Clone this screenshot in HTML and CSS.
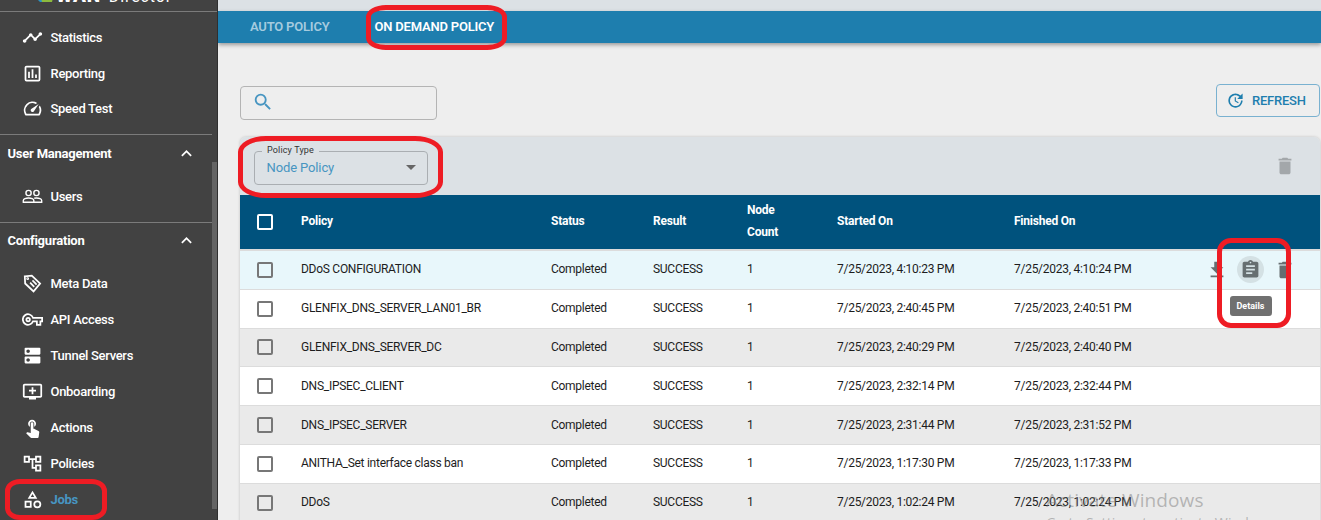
FILE: index.html
```html
<!DOCTYPE html>
<html lang="en">
<head>
<meta charset="utf-8">
<title>Director - Jobs</title>
<link rel="stylesheet" href="styles.css">
</head>
<body>
<svg class="defs" width="0" height="0">
  <symbol id="trash" viewBox="0 0 24 24"><path d="M6 19c0 1.100.9 2 2 2h8c1.100 0 2-.9 2-2V7H6v12zM19 4h-3.500l-1-1h-5l-1 1H5v2h14V4z"/></symbol>
  <symbol id="chevron" viewBox="0 0 24 24"><path d="M12 8l-6 6 1.410 1.410L12 10.830l4.590 4.580L18 14z"/></symbol>
</svg>
<div class="app">
  <aside class="sidebar">
    <div class="brand">
      <svg class="brand-mark" width="18" height="14" viewBox="0 0 18 14"><path fill="#2b94c4" d="M0 10h6l2 4H4z"/><path fill="#8dba3d" d="M5 10h12l-1 4H6z"/></svg>
      <b class="brand-bold">WAN</b><span class="brand-name">Director</span>
    </div>
    <nav class="nav">
      <ul class="group">
        <li class="item"><svg class="icon" viewBox="0 0 24 24"><path d="M23 8c0 1.100-.9 2-2 2-.18 0-.35-.02-.51-.07l-3.560 3.550c.05.16.07.34.07.52 0 1.100-.9 2-2 2s-2-.9-2-2c0-.18.02-.36.07-.52l-2.550-2.550c-.16.05-.34.07-.52.07s-.36-.02-.52-.07l-4.550 4.560c.05.16.07.33.07.51 0 1.100-.9 2-2 2s-2-.9-2-2 .9-2 2-2c.18 0 .35.02.51.07l4.560-4.550C8.020 9.360 8 9.180 8 9c0-1.100.9-2 2-2s2 .9 2 2c0 .18-.02.36-.07.52l2.550 2.550c.16-.05.34-.07.52-.07s.36.02.52.07l3.550-3.560C19.020 8.350 19 8.180 19 8c0-1.100.9-2 2-2s2 .9 2 2z"/></svg>Statistics</li>
        <li class="item"><svg class="icon line" viewBox="0 0 24 24"><rect x="4" y="4" width="16" height="16" rx="1.200"/><path d="M8 17v-7M12 17V7M16 17v-4"/></svg>Reporting</li>
        <li class="item speed"><svg class="icon" viewBox="0 0 24 24"><path d="M20.380 8.570l-1.230 1.850a8 8 0 0 1-.22 7.580H5.070A8 8 0 0 1 15.580 6.850l1.850-1.230A10 10 0 0 0 3.350 19a2 2 0 0 0 1.720 1h13.850a2 2 0 0 0 1.740-1 10 10 0 0 0-.27-10.440zM10.590 15.410a2 2 0 0 0 2.830 0l5.660-8.490-8.490 5.660a2 2 0 0 0 0 2.830z"/></svg>Speed Test</li>
      </ul>
      <div class="heading">User Management<svg class="icon" viewBox="0 0 24 24"><use href="#chevron"/></svg></div>
      <ul class="group users">
        <li class="item"><svg class="icon line thin" viewBox="0 0 24 24"><circle cx="7.500" cy="8" r="3"/><circle cx="16.500" cy="8" r="3"/><path d="M1.500 18.500v-1.800c0-1.700 3-3 6-3s6 1.300 6 3v1.800zM14 14c.8-.2 1.700-.3 2.500-.3 3 0 6 1.300 6 3v1.800h-9"/></svg>Users</li>
      </ul>
      <div class="heading config">Configuration<svg class="icon" viewBox="0 0 24 24"><use href="#chevron"/></svg></div>
      <ul class="group last">
        <li class="item"><svg class="icon line" viewBox="0 0 24 24"><path d="M3.200 3.800l8-.8 9.500 9-7.500 9L3.600 12z"/><circle cx="6.500" cy="6.500" r=".6"/><path d="M9.300 11l4.700 4.800M12 8.500l4.700 4.800"/></svg>Meta Data</li>
        <li class="item"><svg class="icon line" viewBox="0 0 24 24"><path d="M12.600 10H23v4h-2v4h-4v-4h-4.400A6 6 0 1 1 12.600 10z"/><circle cx="7" cy="12" r="2"/></svg>API Access</li>
        <li class="item"><svg class="icon" viewBox="0 0 24 24"><path d="M20 13H4c-.55 0-1 .45-1 1v6c0 .55.45 1 1 1h16c.55 0 1-.45 1-1v-6c0-.55-.45-1-1-1zM7 19c-1.100 0-2-.9-2-2s.9-2 2-2 2 .9 2 2-.9 2-2 2zM20 3H4c-.55 0-1 .45-1 1v6c0 .55.45 1 1 1h16c.55 0 1-.45 1-1V4c0-.55-.45-1-1-1zM7 9c-1.100 0-2-.9-2-2s.9-2 2-2 2 .9 2 2-.9 2-2 2z"/></svg>Tunnel Servers</li>
        <li class="item"><svg class="icon" viewBox="0 0 24 24"><path d="M21 3H3c-1.110 0-2 .89-2 2v12c0 1.100.89 2 2 2h5v2h8v-2h5c1.100 0 1.990-.9 1.990-2L23 5c0-1.110-.9-2-2-2zm0 14H3V5h18v12zm-5-7v2h-3v3h-2v-3H8v-2h3V7h2v3h3z"/></svg>Onboarding</li>
        <li class="item"><svg class="icon" viewBox="0 0 24 24"><path d="M9 11.240V7.500C9 6.120 10.120 5 11.500 5S14 6.120 14 7.500v3.740c1.210-.81 2-2.180 2-3.740C16 5.010 13.990 3 11.500 3S7 5.010 7 7.500c0 1.560.79 2.930 2 3.740zm9.840 4.630l-4.540-2.260c-.17-.07-.35-.11-.54-.11H13v-6c0-.83-.67-1.500-1.500-1.500S10 6.670 10 7.500v10.740l-3.430-.72c-.08-.01-.15-.03-.24-.03-.31 0-.59.13-.79.33l-.79.8 4.940 4.940c.27.27.65.44 1.060.44h6.790c.75 0 1.330-.55 1.440-1.280l.75-5.270c.01-.07.02-.14.02-.2 0-.62-.38-1.160-.91-1.380z"/></svg>Actions</li>
        <li class="item"><svg class="icon" viewBox="0 0 24 24"><path d="M22 11V3h-7v3H9V3H2v8h7V8h2v10h4v3h7v-8h-7v3h-2V8h2v3h7zM7 9H4V5h3v4zm10 6h3v4h-3v-4zm0-10h3v4h-3V5z"/></svg>Policies</li>
        <li class="item active"><svg class="icon" viewBox="0 0 24 24"><path d="M12 2l-5.500 9h11L12 2zm0 3.840L13.930 9h-3.870L12 5.840zM17.500 13a4.500 4.500 0 1 0 0 9 4.500 4.500 0 0 0 0-9zm0 7a2.500 2.500 0 1 1 0-5 2.500 2.500 0 0 1 0 5zM3 21.500h8v-8H3v8zm2-6h4v4H5v-4z"/></svg>Jobs</li>
      </ul>
    </nav>
    <div class="scroll-thumb"></div>
  </aside>

  <main class="main">
    <div class="topbar"></div>
    <div class="tabs"><span class="tab">AUTO POLICY</span><span class="tab selected">ON DEMAND POLICY</span></div>
    <div class="content">
      <div class="actions">
        <div class="search"><svg viewBox="0 0 24 24"><path d="M15.500 14h-.79l-.28-.27A6.470 6.470 0 0 0 16 9.500 6.500 6.500 0 1 0 9.500 16c1.610 0 3.090-.59 4.230-1.570l.27.28v.79l5 4.990L20.490 19l-4.990-5zm-6 0C7.010 14 5 11.990 5 9.500S7.010 5 9.500 5 14 7.010 14 9.500 11.990 14 9.500 14z"/></svg></div>
        <button class="refresh"><svg viewBox="0 0 24 24"><path d="M21 10.120h-6.780l2.740-2.820c-2.730-2.700-7.150-2.800-9.880-.1-2.730 2.710-2.730 7.080 0 9.790s7.150 2.710 9.880 0C18.320 15.650 19 14.080 19 12.100h2c0 1.980-.88 4.550-2.640 6.290-3.510 3.480-9.210 3.480-12.720 0-3.500-3.470-3.530-9.110-.02-12.580s9.140-3.470 12.650 0L21 3v7.120zM12.500 8v4.250l3.500 2.080-.72 1.210L11 13V8h1.500z"/></svg>REFRESH</button>
      </div>
      <section class="card">
        <div class="toolbar">
          <div class="select"><span class="select-label">Policy Type</span>Node Policy<i class="caret"></i></div>
          <svg class="toolbar-trash" viewBox="0 0 24 24"><use href="#trash"/></svg>
        </div>
        <div class="row head"><span><i class="check"></i></span><span>Policy</span><span>Status</span><span>Result</span><span class="wrap">Node Count</span><span>Started On</span><span>Finished On</span></div>
        <div class="row hover"><span><i class="check"></i></span><span>DDoS CONFIGURATION</span><span>Completed</span><span>SUCCESS</span><span>1</span><span>7/25/2023, 4:10:23 PM</span><span>7/25/2023, 4:10:24 PM</span>
          <div class="row-tools">
            <svg viewBox="0 0 24 24"><path d="M19 9h-4V3H9v6H5l7 7 7-7zM5 18v2h14v-2H5z"/></svg>
            <div class="details"><svg viewBox="0 0 24 24"><path d="M19 3h-4.180C14.400 1.840 13.300 1 12 1c-1.300 0-2.400.84-2.820 2H5c-1.100 0-2 .9-2 2v14c0 1.100.9 2 2 2h14c1.100 0 2-.9 2-2V5c0-1.100-.9-2-2-2zm-7 0c.55 0 1 .45 1 1s-.45 1-1 1-1-.45-1-1 .45-1 1-1zm2 14H7v-2h7v2zm3-4H7v-2h10v2zm0-4H7V7h10v2z"/></svg><span class="tooltip">Details</span></div>
            <svg viewBox="0 0 24 24"><use href="#trash"/></svg>
          </div>
        </div>
        <div class="row"><span><i class="check"></i></span><span>GLENFIX_DNS_SERVER_LAN01_BR</span><span>Completed</span><span>SUCCESS</span><span>1</span><span>7/25/2023, 2:40:45 PM</span><span>7/25/2023, 2:40:51 PM</span></div>
        <div class="row alt"><span><i class="check"></i></span><span>GLENFIX_DNS_SERVER_DC</span><span>Completed</span><span>SUCCESS</span><span>1</span><span>7/25/2023, 2:40:29 PM</span><span>7/25/2023, 2:40:40 PM</span></div>
        <div class="row"><span><i class="check"></i></span><span>DNS_IPSEC_CLIENT</span><span>Completed</span><span>SUCCESS</span><span>1</span><span>7/25/2023, 2:32:14 PM</span><span>7/25/2023, 2:32:44 PM</span></div>
        <div class="row alt"><span><i class="check"></i></span><span>DNS_IPSEC_SERVER</span><span>Completed</span><span>SUCCESS</span><span>1</span><span>7/25/2023, 2:31:44 PM</span><span>7/25/2023, 2:31:52 PM</span></div>
        <div class="row"><span><i class="check"></i></span><span>ANITHA_Set interface class ban</span><span>Completed</span><span>SUCCESS</span><span>1</span><span>7/25/2023, 1:17:30 PM</span><span>7/25/2023, 1:17:33 PM</span></div>
        <div class="row alt"><span><i class="check"></i></span><span>DDoS</span><span>Completed</span><span>SUCCESS</span><span>1</span><span>7/25/2023, 1:02:24 PM</span><span>7/25/2023, 1:02:24 PM</span></div>
      </section>
    </div>
  </main>

  <div class="watermark"><div class="wm-title">Activate Windows</div><div class="wm-sub">Go to Settings to activate Windows.</div></div>
  <div class="mark mark-tab"></div>
  <div class="mark mark-select"></div>
  <div class="mark mark-details"></div>
  <div class="mark mark-jobs"></div>
</div>
</body>
</html>
```
FILE: styles.css
```css
* { box-sizing: border-box; }
body { margin: 0; overflow: hidden; font-family: Roboto, "Liberation Sans", sans-serif; }
svg { fill: currentColor; flex: none; display: block; }
.defs { position: absolute; }
.app { position: relative; display: flex; width: 1321px; height: 520px; overflow: hidden; }

/* Sidebar */
.sidebar { position: relative; width: 218px; flex: none; background: #424242; color: #fff; border-right: 1px solid #2f2f2f; overflow: hidden; }
.brand { height: 12px; border-bottom: 1px solid #7b7b7b; padding-left: 36px; display: flex; align-items: flex-end; overflow: hidden; }
.brand-mark { margin-bottom: 9px; }
.brand-bold { font-size: 19px; line-height: 20px; margin: 0 8px 5px 2px; letter-spacing: .8px; font-weight: 900; }
.brand-name { font-size: 16px; line-height: 20px; margin-bottom: 4px; letter-spacing: .9px; }
.nav { width: 212px; }
.group { list-style: none; margin: 0; padding: 7px 0; }
.group.users { padding-bottom: 8px; }
.group.last { padding-top: 6px; }
.item { height: 36px; display: flex; align-items: center; gap: 7.500px; padding-left: 22px; font-size: 13px; font-weight: 500; letter-spacing: -.3px; }
.item.speed { padding-bottom: 1px; }
.icon { width: 21px; height: 21px; }
.line { fill: none; stroke: currentColor; stroke-width: 2; }
.thin { stroke-width: 1.6; }
.item.active { color: #4795c1; font-weight: 700; }
.item.active .icon { color: #fff; }
.heading { height: 37px; border-top: 1px solid #7b7b7b; display: flex; align-items: center; justify-content: space-between; padding: 1px 15px 0 7.500px; font-size: 13px; font-weight: 700; letter-spacing: -.22px; }
.heading.config { padding-top: 0; padding-bottom: 1px; }
.scroll-thumb { position: absolute; right: 0; top: 162px; width: 5px; height: 347px; background: #646464; }

/* Main */
.main { flex: 1; min-width: 0; background: #eee; }
.topbar { height: 11px; background: #dce1e5; }
.tabs { height: 32px; background: #1e7eae; display: flex; align-items: center; gap: 45px; padding: 0 0 1px 32px; font-size: 13px; font-weight: 500; letter-spacing: -.2px; color: #a5cbdf; box-shadow: 0 2px 4px rgba(0,0,0,.35); }
.tab { font-weight: 600; }
.tab.selected { color: #fff; }
.content { padding: 41px 1px 0 22px; }
.actions { display: flex; justify-content: space-between; }
.search { width: 197px; height: 34px; margin-top: 2px; border: 1px solid #b4b4b4; border-radius: 4px; padding: 4px 11px; color: #4795c1; }
.search svg { width: 22px; height: 22px; }
.refresh { width: 104px; height: 33px; border: 1px solid #79b1d0; border-radius: 4px; background: none; display: flex; align-items: center; gap: 7px; padding: 0 0 0 9px; font: 500 13px Roboto, sans-serif; letter-spacing: -.24px; color: #1e7eae; }
.refresh svg { width: 19px; height: 19px; }
.card { margin-top: 17px; border-radius: 6px 6px 0 0; overflow: hidden; box-shadow: 0 0 3px rgba(0,0,0,.2); }
.toolbar { height: 58px; background: #dce1e5; display: flex; justify-content: space-between; align-items: center; padding: 0 24.500px 0 14px; }
.select { position: relative; width: 174px; height: 34px; margin-top: 3px; border: 1px solid #aaaeb2; border-radius: 4px; display: flex; align-items: center; justify-content: space-between; padding: 0 11px 0 11.500px; font-size: 13px; letter-spacing: -.12px; color: #4795c1; }
.select-label { position: absolute; left: 7px; top: -8px; padding: 0 5px; background: #dce1e5; font-size: 9px; line-height: 13px; letter-spacing: .15px; color: #333; }
.caret { border: 5px solid transparent; border-top-color: #666; border-bottom: 0; }
.toolbar-trash { width: 22px; height: 22px; color: #a3a7aa; }

.row { position: relative; display: grid; grid-template-columns: 61px 250px 102px 94px 90px 177px 1fr; align-items: center; height: 38.8px; background: #fff; border-bottom: 1px solid #dcdcdc; font-size: 12px; letter-spacing: -.27px; color: #1d1d1d; white-space: nowrap; }
.row > span { padding-bottom: 1px; }
.row > span:first-child { padding: 0 0 0 17px; }
.row.alt { background: #eaeaea; }
.row.hover { background: #e8f7fb; z-index: 1; }
.row.head { height: 56px; background: #00527d; color: #fff; border-bottom: 2px solid #dcdcdc; font-weight: 700; letter-spacing: -.22px; }
.row.head > span { padding-bottom: 3px; }
.row.head > span:first-child { padding-bottom: 1px; }
.row.head > .wrap { white-space: normal; width: 40px; line-height: 22px; }
.check { display: block; width: 16px; height: 16px; border: 2px solid #777; border-radius: 2px; }
.head .check { border-color: #fff; }
.row-tools { position: absolute; right: 24px; top: 5px; display: flex; align-items: center; gap: 10px; color: #666e70; }
.row-tools svg { width: 22px; height: 22px; }
.row-tools > svg:first-child { margin-right: -1px; }
.details { width: 27px; height: 27px; border-radius: 50%; background: #d4e1e4; display: flex; align-items: center; justify-content: center; position: relative; }
.details svg { width: 21px; height: 21px; }
.tooltip { position: absolute; top: 40px; left: 50%; transform: translateX(-50%); width: 42px; height: 20px; border-radius: 3px; background: #707070; color: #fff; font-size: 9px; font-weight: 700; line-height: 20px; letter-spacing: 0; text-align: center; }

/* Overlays */
.watermark { position: absolute; left: 1046px; top: 486px; z-index: 1; font-family: "Open Sans", sans-serif; color: rgba(125,125,125,.5); white-space: nowrap; }
.wm-title { font-size: 19px; line-height: 28px; letter-spacing: .1px; }
.wm-sub { font-size: 14px; line-height: 18px; letter-spacing: .1px; }
.mark { position: absolute; border: 5px solid #ee1c24; z-index: 2; }
.mark-tab { left: 366px; top: 5px; width: 141px; height: 45px; border-radius: 20px / 12px; }
.mark-select { left: 238px; top: 136px; width: 205px; height: 62px; border-radius: 28px / 16px; }
.mark-details { left: 1217px; top: 238px; width: 74px; height: 90px; border-radius: 14px; }
.mark-jobs { left: 5px; top: 479px; width: 102px; height: 41px; border-radius: 15px / 12px; }
```
